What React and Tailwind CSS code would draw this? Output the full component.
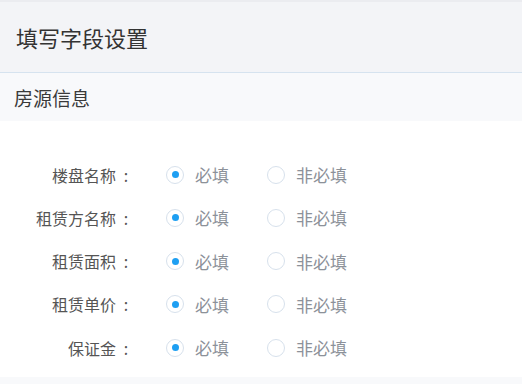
import React, { useState } from "react"

const FONT = { fontFamily: '"Noto Sans CJK SC", "Noto Sans", sans-serif' }

const fields = ["楼盘名称", "租赁方名称", "租赁面积", "租赁单价", "保证金"]

function Radio({ checked, label, onClick }) {
  return (
    <button onClick={onClick} className="flex items-center gap-[11px] cursor-pointer">
      <span className="w-[18px] h-[18px] rounded-full border border-[#d7e1ec] bg-white flex items-center justify-center">
        {checked && <span className="w-[7px] h-[7px] rounded-full bg-[#1e9ff2]" />}
      </span>
      <span className="text-[17px] text-[#8c9199] leading-none">{label}</span>
    </button>
  )
}

export default function App() {
  const [vals, setVals] = useState(fields.map(() => true))
  const set = (i, v) => setVals(vals.map((x, j) => (j === i ? v : x)))

  return (
    <div className="w-[522px] h-[384px] bg-[#f8f9fb] flex flex-col" style={FONT}>
      {/* Header */}
      <div className="h-[73px] bg-[#f3f4f7] border-t-2 border-[#ebecf0] border-b border-b-[#d6e3ef] flex items-center px-[16px]">
        <h1 className="text-[22px] text-[#333] leading-none">填写字段设置</h1>
      </div>

      {/* Section title */}
      <div className="h-[48px] flex items-center px-[14px]">
        <h2 className="text-[19px] text-[#3a3a3a] leading-none">房源信息</h2>
      </div>

      {/* Fields */}
      <div className="bg-white h-[256px] pt-[32px] flex flex-col">
        {fields.map((f, i) => (
          <div key={f} className="h-[43.25px] flex items-center">
            <div className="w-[140px] flex justify-end items-center pr-[4px] text-[16px] text-[#555] leading-none">
              <span>{f}</span>
              <span className="w-[20px] text-center">:</span>
            </div>
            <div className="ml-[26px] w-[101px]">
              <Radio checked={vals[i]} label="必填" onClick={() => set(i, true)} />
            </div>
            <Radio checked={!vals[i]} label="非必填" onClick={() => set(i, false)} />
          </div>
        ))}
      </div>
    </div>
  )
}
